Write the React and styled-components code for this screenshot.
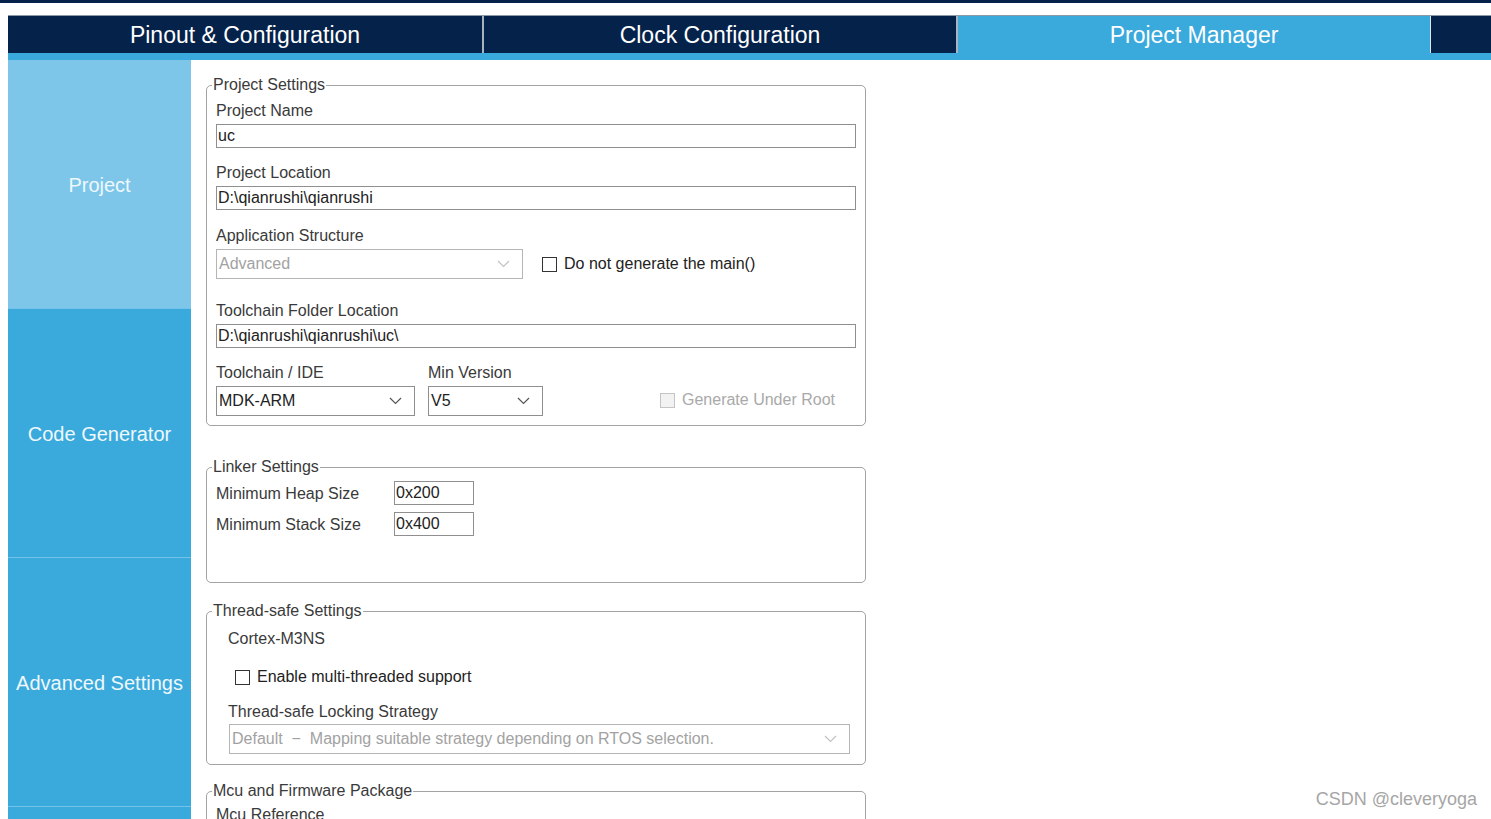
import React from "react";
import styled, { createGlobalStyle } from "styled-components";

const navy = "#05224a";
const blue = "#3aa9dc";
const lightBlue = "#7dc6ea";

const GlobalStyle = createGlobalStyle`
  html, body {
    margin: 0;
    padding: 0;
    background: #ffffff;
    overflow: hidden;
  }
  body {
    font-family: "Liberation Sans", Arial, sans-serif;
  }
`;

const Page = styled.div`
  position: relative;
  width: 1491px;
  height: 819px;
  overflow: hidden;
  background: #fff;
`;

const TopStrip = styled.div`
  height: 3px;
  background: ${navy};
  margin-bottom: 12px;
`;

const Frame = styled.div`
  margin-left: 8px;
`;

const TabBar = styled.div`
  display: flex;
  height: 38px;
  background: ${navy};
  border-top: 1px solid #8a98aa;
  box-sizing: border-box;
`;

const Tab = styled.div`
  width: 474px;
  flex: none;
  display: flex;
  align-items: center;
  justify-content: center;
  color: #fff;
  font-size: 23px;
  background: ${(p) => (p.$active ? blue : navy)};
  border-left: ${(p) => (p.$first ? "none" : "2px solid #a9b3c0")};
  box-sizing: border-box;
  padding-top: 1px;
`;

const TabFiller = styled.div`
  flex: 1;
  background: ${navy};
  border-left: 1px solid #dfe8f0;
`;

const AccentStrip = styled.div`
  height: 7px;
  background: ${blue};
`;

const Body = styled.div`
  display: flex;
  align-items: flex-start;
`;

const Sidebar = styled.div`
  width: 183px;
  flex: none;
  display: flex;
  flex-direction: column;
`;

const SideItem = styled.div`
  height: 249px;
  flex: none;
  display: flex;
  align-items: center;
  justify-content: center;
  background: ${(p) => (p.$selected ? lightBlue : blue)};
  border-bottom: 1px solid #72c2e9;
  color: #eef8fd;
  font-size: 20px;
  padding-top: 3px;
  box-sizing: border-box;
`;

const Main = styled.div`
  flex: 1;
  padding-left: 15px;
  padding-top: 16px;
`;

const Group = styled.fieldset`
  width: 660px;
  box-sizing: border-box;
  margin: ${(p) => p.$mt || 0}px 0 0 0;
  padding: 0 9px ${(p) => p.$pb || 9}px 9px;
  border: 1px solid #a3a3a3;
  border-radius: 5px;
  min-width: 0;
`;

const Legend = styled.legend`
  margin-left: -4px;
  padding: 0 1px;
  font-size: 16px;
  line-height: 18px;
  color: #3a3a3a;
`;

const Label = styled.div`
  font-size: 16px;
  line-height: 20px;
  color: #3a3a3a;
  margin-top: ${(p) => p.$mt || 0}px;
  margin-bottom: ${(p) => (p.$mb === undefined ? 3 : p.$mb)}px;
  padding-left: ${(p) => p.$indent || 0}px;
`;

const TextBox = styled.div`
  box-sizing: border-box;
  height: 24px;
  width: ${(p) => p.$w || "100%"};
  border: 1px solid #8f8f8f;
  font-size: 16px;
  line-height: 22px;
  padding-left: 1px;
  color: #222;
  background: #fff;
  white-space: nowrap;
  overflow: hidden;
`;

const SelectBox = styled.div`
  box-sizing: border-box;
  height: ${(p) => p.$h || 30}px;
  width: ${(p) => p.$w};
  border: 1px solid ${(p) => (p.$disabled ? "#b5b5b5" : "#8f8f8f")};
  display: flex;
  align-items: center;
  justify-content: space-between;
  padding: 0 12px 0 2px;
  font-size: 16px;
  color: ${(p) => (p.$disabled ? "#a2a2a2" : "#222")};
  background: #fff;
  margin-left: ${(p) => p.$ml || 0}px;
  white-space: pre;
`;

const Row = styled.div`
  display: flex;
  align-items: ${(p) => p.$align || "center"};
  gap: ${(p) => p.$gap || 0}px;
  margin-top: ${(p) => p.$mt || 0}px;
`;

const Column = styled.div`
  display: flex;
  flex-direction: column;
  width: ${(p) => p.$w || "auto"};
`;

const CheckRow = styled.label`
  display: flex;
  align-items: center;
  gap: 7px;
  font-size: 16px;
  color: ${(p) => (p.$disabled ? "#a9a9a9" : "#222")};
  margin-left: ${(p) => p.$ml || 0}px;
  margin-top: ${(p) => p.$mt || 0}px;
  margin-bottom: ${(p) => p.$mb || 0}px;
`;

const Box = styled.span`
  width: 13px;
  height: 13px;
  flex: none;
  border: 1px solid ${(p) => (p.$disabled ? "#c4c4c4" : "#333")};
  background: ${(p) => (p.$disabled ? "#f2f2f2" : "#fff")};
`;

const LinkerRow = styled.div`
  display: flex;
  align-items: center;
  margin-top: ${(p) => p.$mt || 0}px;
`;

const LinkerLabel = styled.div`
  width: 178px;
  font-size: 16px;
  color: #3a3a3a;
  padding-top: 1px;
`;

const Watermark = styled.div`
  position: absolute;
  right: 14px;
  bottom: 9px;
  font-size: 18px;
  color: #a6a6a6;
  font-family: "Liberation Sans", Arial, sans-serif;
`;

const Chevron = ({ light }) => (
  <svg width="13" height="8" viewBox="0 0 13 8">
    <polyline
      points="1,1 6.5,6.5 12,1"
      fill="none"
      stroke={light ? "#c2c2c2" : "#555"}
      strokeWidth="1.2"
    />
  </svg>
);

const Select = ({ value, disabled, ...rest }) => (
  <SelectBox $disabled={disabled} {...rest}>
    <span>{value}</span>
    <Chevron light={disabled} />
  </SelectBox>
);

const Check = ({ label, disabled, ...rest }) => (
  <CheckRow $disabled={disabled} {...rest}>
    <Box $disabled={disabled} />
    {label}
  </CheckRow>
);

export default function App() {
  return (
    <Page>
      <GlobalStyle />
      <TopStrip />
      <Frame>
        <TabBar>
          <Tab $first>Pinout &amp; Configuration</Tab>
          <Tab>Clock Configuration</Tab>
          <Tab $active>Project Manager</Tab>
          <TabFiller />
        </TabBar>
        <AccentStrip />
        <Body>
          <Sidebar>
            <SideItem $selected>Project</SideItem>
            <SideItem>Code Generator</SideItem>
            <SideItem>Advanced Settings</SideItem>
            <SideItem />
          </Sidebar>
          <Main>
            <Group $pb={9}>
              <Legend>Project Settings</Legend>
              <Label $mt={7}>Project Name</Label>
              <TextBox>uc</TextBox>
              <Label $mt={15}>Project Location</Label>
              <TextBox>D:\qianrushi\qianrushi</TextBox>
              <Label $mt={16}>Application Structure</Label>
              <Row>
                <Select value="Advanced" disabled $w="307px" />
                <Check label="Do not generate the main()" $ml={19} />
              </Row>
              <Label $mt={22}>Toolchain Folder Location</Label>
              <TextBox>D:\qianrushi\qianrushi\uc\</TextBox>
              <Row $align="flex-end" $gap={13} $mt={15}>
                <Column $w="199px">
                  <Label>Toolchain / IDE</Label>
                  <Select value="MDK-ARM" $w="199px" />
                </Column>
                <Column $w="115px">
                  <Label>Min Version</Label>
                  <Select value="V5" $w="115px" />
                </Column>
                <Check label="Generate Under Root" disabled $ml={104} $mb={7} />
              </Row>
            </Group>

            <Group $mt={32} $pb={46}>
              <Legend>Linker Settings</Legend>
              <LinkerRow $mt={5}>
                <LinkerLabel>Minimum Heap Size</LinkerLabel>
                <TextBox $w="80px">0x200</TextBox>
              </LinkerRow>
              <LinkerRow $mt={7}>
                <LinkerLabel>Minimum Stack Size</LinkerLabel>
                <TextBox $w="80px">0x400</TextBox>
              </LinkerRow>
            </Group>

            <Group $mt={19} $pb={10}>
              <Legend>Thread-safe Settings</Legend>
              <Label $mt={9} $indent={12}>Cortex-M3NS</Label>
              <Check label="Enable multi-threaded support" $ml={19} $mt={19} />
              <Label $mt={16} $mb={2} $indent={12}>Thread-safe Locking Strategy</Label>
              <Select
                value="Default  −  Mapping suitable strategy depending on RTOS selection."
                disabled
                $w="621px"
                $ml={13}
              />
            </Group>

            <Group $mt={17}>
              <Legend>Mcu and Firmware Package</Legend>
              <Label $mt={5}>Mcu Reference</Label>
              <TextBox>STM32F103C8Tx</TextBox>
            </Group>
          </Main>
        </Body>
      </Frame>
      <Watermark>CSDN @cleveryoga</Watermark>
    </Page>
  );
}
